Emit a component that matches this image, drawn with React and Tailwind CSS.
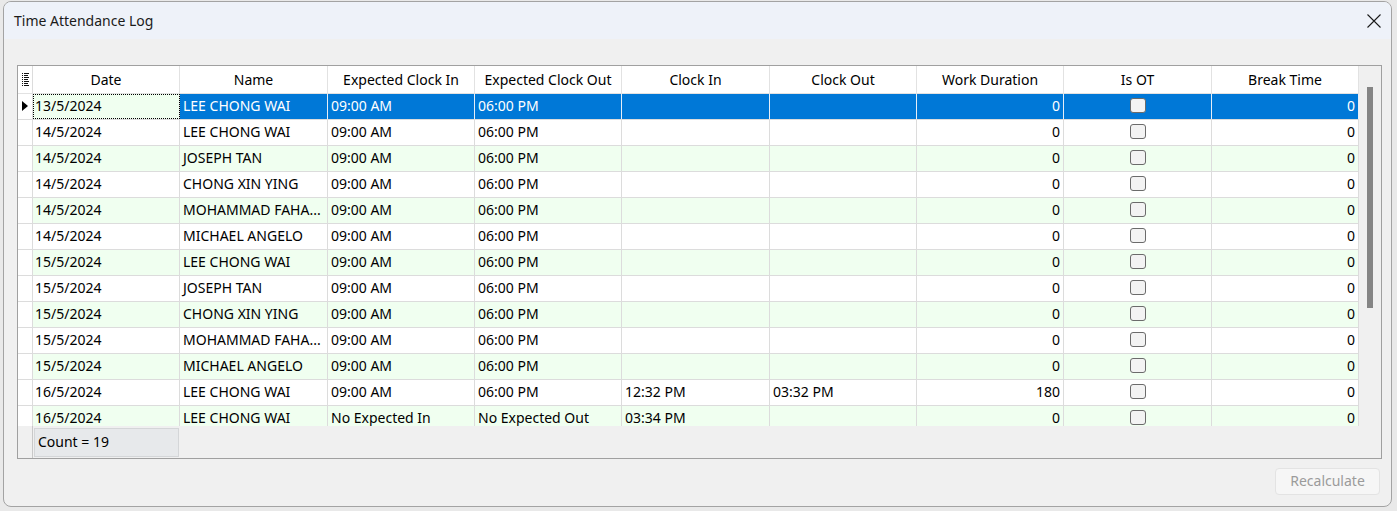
import React from "react";

const rows = [
  ["13/5/2024", "LEE CHONG WAI", "09:00 AM", "06:00 PM", "", "", "0", "0"],
  ["14/5/2024", "LEE CHONG WAI", "09:00 AM", "06:00 PM", "", "", "0", "0"],
  ["14/5/2024", "JOSEPH TAN", "09:00 AM", "06:00 PM", "", "", "0", "0"],
  ["14/5/2024", "CHONG XIN YING", "09:00 AM", "06:00 PM", "", "", "0", "0"],
  ["14/5/2024", "MOHAMMAD FAHA...", "09:00 AM", "06:00 PM", "", "", "0", "0"],
  ["14/5/2024", "MICHAEL ANGELO", "09:00 AM", "06:00 PM", "", "", "0", "0"],
  ["15/5/2024", "LEE CHONG WAI", "09:00 AM", "06:00 PM", "", "", "0", "0"],
  ["15/5/2024", "JOSEPH TAN", "09:00 AM", "06:00 PM", "", "", "0", "0"],
  ["15/5/2024", "CHONG XIN YING", "09:00 AM", "06:00 PM", "", "", "0", "0"],
  ["15/5/2024", "MOHAMMAD FAHA...", "09:00 AM", "06:00 PM", "", "", "0", "0"],
  ["15/5/2024", "MICHAEL ANGELO", "09:00 AM", "06:00 PM", "", "", "0", "0"],
  ["16/5/2024", "LEE CHONG WAI", "09:00 AM", "06:00 PM", "12:32 PM", "03:32 PM", "180", "0"],
  ["16/5/2024", "LEE CHONG WAI", "No Expected In", "No Expected Out", "03:34 PM", "", "0", "0"],
];

const headers = ["Date", "Name", "Expected Clock In", "Expected Clock Out", "Clock In", "Clock Out", "Work Duration", "Is OT", "Break Time"];

const gridCols = "grid grid-cols-[15px_147px_148px_147px_147px_148px_147px_147px_148px_147px]";

function ColumnIcon() {
  return (
    <svg width="7" height="14" viewBox="0 0 7 14" className="block">
      {[0, 2, 4, 6, 8, 10, 12].map((y, i) => (
        <g key={y} fill="#111">
          <rect x="0" y={y} width="1" height="1" />
          <rect x="2" y={y} width={i % 2 === 0 ? 5 : 4} height="1" />
        </g>
      ))}
    </svg>
  );
}

function Checkbox() {
  return <div className="w-[16px] h-[15px] rounded-[3px] border border-[#6b6b6b] bg-[#f3f3f3]" />;
}

export default function App() {
  return (
    <div className="w-[1397px] h-[511px] bg-[#e9e9e9] pt-[1px] pl-[3px] overflow-hidden font-['Noto_Sans',sans-serif] text-[14px] text-black">
      <div className="w-[1389px] h-[506px] rounded-lg border border-[#a3a3a3] bg-[#f0f0f0] overflow-hidden flex flex-col">
        {/* title bar */}
        <div className="h-[37px] shrink-0 bg-[#eef2f9] flex items-center justify-between pl-[10px] pr-[10px]">
          <span className="text-[14px] text-[#1b1b1b]">Time Attendance Log</span>
          <svg width="14" height="14" viewBox="0 0 14 14">
            <path d="M0.5 0.5 L13.5 13.5 M13.5 0.5 L0.5 13.5" stroke="#1b1b1b" strokeWidth="1.1" />
          </svg>
        </div>

        {/* grid */}
        <div className="mt-[26px] ml-[13px] w-[1365px] h-[394px] border border-[#a0a0a0] flex">
          <div className="flex flex-col w-[1341px]">
            <div className={`${gridCols} h-[28px] bg-white border-b border-[#e2e2e2]`}>
              <div className="border-r border-[#dcdcdc] flex items-center justify-center">
                <ColumnIcon />
              </div>
              {headers.map((h) => (
                <div key={h} className="border-r border-[#e2e2e2] flex items-center justify-center pb-[1px]">
                  {h}
                </div>
              ))}
            </div>

            <div className="h-[332px] overflow-hidden">
              {rows.map((r, i) => {
                const selected = i === 0;
                const bg = i % 2 === 0 ? "bg-[#f0fff0]" : "bg-white";
                const cell = `border-r border-[#dcdcdc] flex items-center px-[3px] pb-[3px] whitespace-nowrap overflow-hidden ${
                  selected ? "bg-[#0078d7] text-white border-r-[#e6eef7]" : bg
                }`;
                return (
                  <div key={i} className={`${gridCols} h-[26px] border-b border-[#dcdcdc]`}>
                    <div className="bg-white border-r border-[#dcdcdc] flex items-center pl-[4px] pb-[1px]">
                      {selected && <div className="w-0 h-0 border-y-[5px] border-y-transparent border-l-[6px] border-l-black" />}
                    </div>
                    <div className={`border-r border-[#dcdcdc] flex items-center pl-[2px] pb-[3px] whitespace-nowrap ${bg} ${selected ? "outline outline-1 outline-dotted outline-black -outline-offset-1" : ""}`}>
                      {r[0]}
                    </div>
                    <div className={cell}>{r[1]}</div>
                    <div className={cell}>{r[2]}</div>
                    <div className={cell}>{r[3]}</div>
                    <div className={cell}>{r[4]}</div>
                    <div className={cell}>{r[5]}</div>
                    <div className={`${cell} justify-end`}>{r[6]}</div>
                    <div className={`${cell} justify-center pb-[2px]`}>
                      <Checkbox />
                    </div>
                    <div className={`${cell} justify-end`}>{r[7]}</div>
                  </div>
                );
              })}
            </div>

            {/* footer */}
            <div className="h-[32px] flex bg-[#f0f0f0]">
              <div className="w-[15px] border-r border-[#c8c8c8]" />
              <div className="ml-[1px] mt-[2px] w-[145px] h-[29px] bg-[#e7e9eb] border border-[#d4d6d8] flex items-center pl-[3px] pb-[2px]">
                Count = 19
              </div>
            </div>
          </div>

          {/* scrollbar */}
          <div className="w-[22px] bg-[#f0f0f0] pt-[21px] pl-[8px]">
            <div className="w-[6px] h-[221px] bg-[#858585]" />
          </div>
        </div>

        {/* footer buttons */}
        <div className="flex justify-end mt-[9px] pr-[11px]">
          <button className="w-[105px] h-[27px] rounded-[4px] bg-[#f6f6f6] border border-[#e3e3e3] text-[#9b9b9b] flex items-center justify-center pb-[2px]">
            Recalculate
          </button>
        </div>
      </div>
    </div>
  );
}
